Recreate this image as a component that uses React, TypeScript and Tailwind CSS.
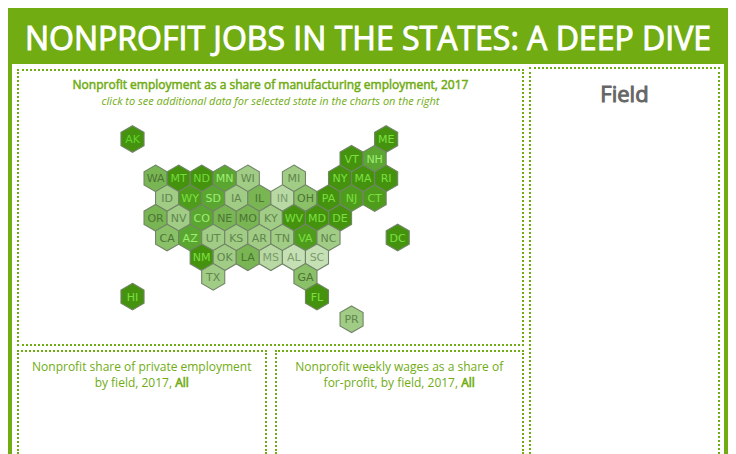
type Hex = { id: string; col: number; row: number; fill: string; ink: string };

const DARK = '#45920f';
const DEEP = '#4f9c1d';
const STRONG = '#5ba631';
const MEDIUM = '#79b653';
const SOFT = '#8ac067';
const LIGHT = '#a1cc85';
const PALE = '#b8d9a3';
const FAINT = '#c6e0b5';

const BRIGHT = '#7be03f';
const GLOW = '#9df072';
const SHADE = '#4c7434';
const MUTED = '#60854d';
const DIM = '#7b9b6c';

const at = (id: string, col: number, row: number, fill: string, ink: string): Hex => ({ id, col, row, fill, ink });

const HEXES: Hex[] = [
  at('AK', 0, 0, DARK, '#62d52b'),
  at('ME', 22, 0, DARK, BRIGHT),
  at('VT', 19, 1, DARK, BRIGHT),
  at('NH', 21, 1, STRONG, GLOW),
  at('WA', 2, 2, MEDIUM, SHADE),
  at('MT', 4, 2, DARK, '#72dc39'),
  at('ND', 6, 2, DARK, '#72dc39'),
  at('MN', 8, 2, STRONG, GLOW),
  at('WI', 10, 2, LIGHT, MUTED),
  at('MI', 14, 2, LIGHT, MUTED),
  at('NY', 18, 2, DARK, BRIGHT),
  at('MA', 20, 2, DARK, BRIGHT),
  at('RI', 22, 2, DARK, BRIGHT),
  at('ID', 3, 3, LIGHT, MUTED),
  at('WY', 5, 3, DEEP, BRIGHT),
  at('SD', 7, 3, STRONG, GLOW),
  at('IA', 9, 3, LIGHT, MUTED),
  at('IL', 11, 3, MEDIUM, SHADE),
  at('IN', 13, 3, PALE, DIM),
  at('OH', 15, 3, SOFT, SHADE),
  at('PA', 17, 3, DARK, BRIGHT),
  at('NJ', 19, 3, DEEP, BRIGHT),
  at('CT', 21, 3, DEEP, BRIGHT),
  at('OR', 2, 4, MEDIUM, SHADE),
  at('NV', 4, 4, LIGHT, MUTED),
  at('CO', 6, 4, STRONG, GLOW),
  at('NE', 8, 4, MEDIUM, SHADE),
  at('MO', 10, 4, MEDIUM, SHADE),
  at('KY', 12, 4, LIGHT, MUTED),
  at('WV', 14, 4, DARK, BRIGHT),
  at('MD', 16, 4, DARK, BRIGHT),
  at('DE', 18, 4, DARK, BRIGHT),
  at('CA', 3, 5, SOFT, SHADE),
  at('AZ', 5, 5, STRONG, GLOW),
  at('UT', 7, 5, LIGHT, MUTED),
  at('KS', 9, 5, LIGHT, MUTED),
  at('AR', 11, 5, LIGHT, MUTED),
  at('TN', 13, 5, LIGHT, MUTED),
  at('VA', 15, 5, DEEP, BRIGHT),
  at('NC', 17, 5, LIGHT, MUTED),
  at('DC', 23, 5, DARK, BRIGHT),
  at('NM', 6, 6, DARK, BRIGHT),
  at('OK', 8, 6, LIGHT, MUTED),
  at('LA', 10, 6, MEDIUM, SHADE),
  at('MS', 12, 6, PALE, DIM),
  at('AL', 14, 6, FAINT, DIM),
  at('SC', 16, 6, FAINT, DIM),
  at('TX', 7, 7, LIGHT, MUTED),
  at('GA', 15, 7, SOFT, SHADE),
  at('HI', 0, 8, DARK, BRIGHT),
  at('FL', 16, 8, DARK, BRIGHT),
  at('PR', 19, 9.15, LIGHT, MUTED),
];

const HALF = 11.53;
const STEP = 19.7;

function HexMap() {
  return (
    <svg viewBox="0 0 306 212" className="mx-auto block w-[306px]" role="img" aria-label="Map of states">
      {HEXES.map(({ id, col, row, fill, ink }) => {
        const x = 14.5 + col * HALF;
        const y = 15 + row * STEP;
        const points = [
          [0, -13.3],
          [HALF, -6.65],
          [HALF, 6.65],
          [0, 13.3],
          [-HALF, 6.65],
          [-HALF, -6.65],
        ]
          .map(([dx, dy]) => `${x + dx},${y + dy}`)
          .join(' ');
        return (
          <g key={id}>
            <polygon points={points} fill={fill} stroke="#728568" strokeWidth="1.1" />
            <text
              x={x}
              y={y + 4}
              textAnchor="middle"
              fill={ink}
              className="font-['DejaVu_Sans',sans-serif] text-[11px]"
            >
              {id}
            </text>
          </g>
        );
      })}
    </svg>
  );
}

function FieldChart({ title }: { title: string }) {
  return (
    <section className="border-2 border-b-0 border-dotted border-[#70ac12] px-3 pt-[7px] text-center text-xs leading-4">
      <h2>
        {title} <span className="[-webkit-text-stroke:0.6px]">All</span>
      </h2>
    </section>
  );
}

export default function App() {
  return (
    <main className="flex min-h-screen flex-col bg-white px-2 pt-2 font-['Open_Sans',sans-serif] text-[#70ac12]">
      <header className="bg-[#70ac12] pt-1.5 pb-0.5 text-center text-white">
        <h1 className="text-[32px] leading-12 whitespace-nowrap [-webkit-text-stroke:1px]">
          NONPROFIT JOBS IN THE STATES: A DEEP DIVE
        </h1>
      </header>
      <div className="flex flex-1 gap-[5px] border-x-4 border-[#70ac12] pt-[3px] pr-1 pl-[5px]">
        <div className="flex flex-1 flex-col gap-1 pt-0.5">
          <section className="border-2 border-dotted border-[#70ac12] pt-1.5 pb-2 text-center">
            <h2 className="text-xs leading-4 [-webkit-text-stroke:0.5px]">
              Nonprofit employment as a share of manufacturing employment, 2017
            </h2>
            <p className="mb-[15px] text-[11px] leading-4 italic">
              click to see additional data for selected state in the charts on the right
            </p>
            <HexMap />
          </section>
          <div className="grid flex-1 grid-cols-2 gap-2">
            <FieldChart title="Nonprofit share of private employment by field, 2017," />
            <FieldChart title="Nonprofit weekly wages as a share of for-profit, by field, 2017," />
          </div>
        </div>
        <aside className="w-[191px] border-2 border-b-0 border-dotted border-[#70ac12] pt-2 text-center text-[#666666]">
          <h2 className="text-[22px] leading-8 [-webkit-text-stroke:1px]">Field</h2>
        </aside>
      </div>
    </main>
  );
}
